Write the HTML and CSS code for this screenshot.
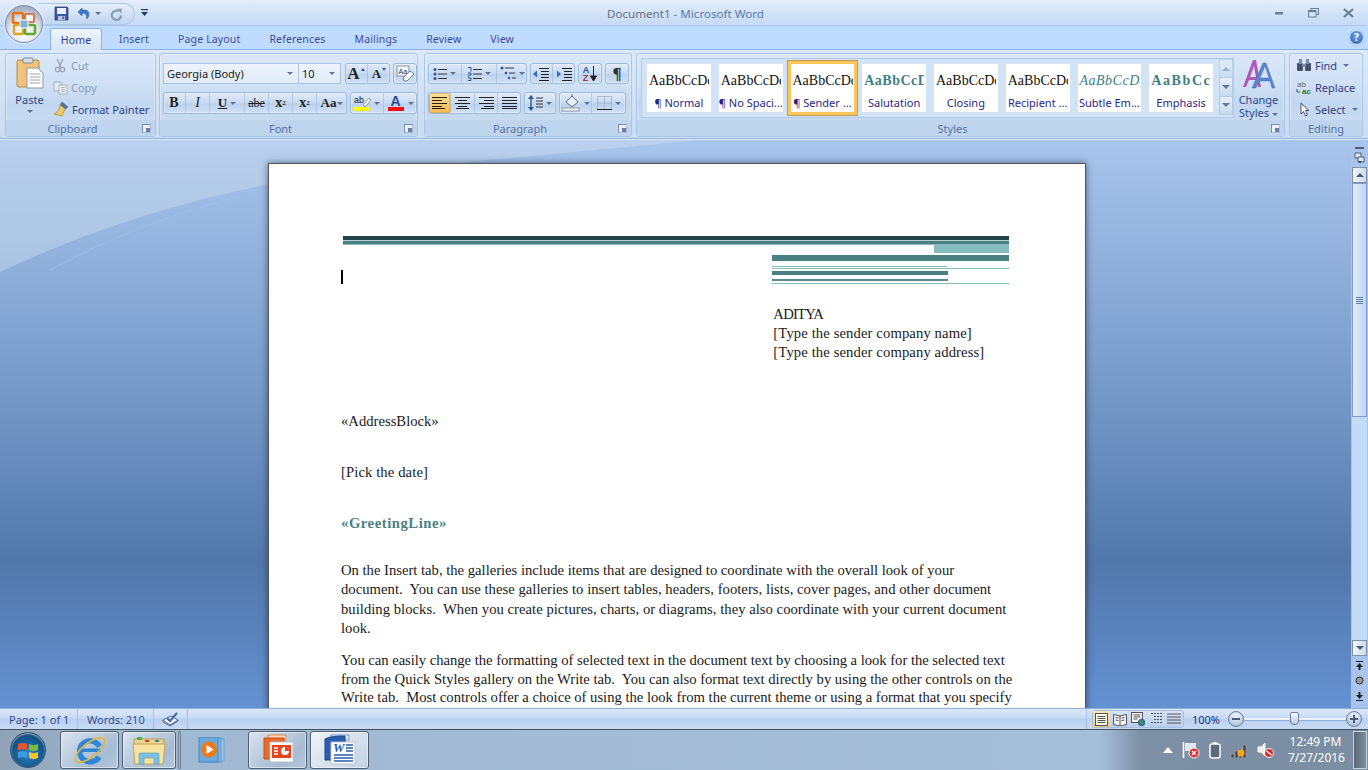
FILE: index.html
```html
<!DOCTYPE html>
<html>
<head>
    <title>Document1 - Microsoft Word</title>
    <link rel="stylesheet" href="styles.css">
</head>
<body>

<div class="office-button">
    <svg width="26" height="26" viewBox="0 0 26 26">
        <rect x="2" y="2" width="10" height="10" rx="1.5" fill="none" stroke="#e8741a" stroke-width="2.6"/>
        <rect x="14" y="3" width="9" height="8" rx="1" fill="#f4f4f4" stroke="#d9582a" stroke-width="1.6"/>
        <rect x="3" y="14" width="9" height="9" rx="1" fill="none" stroke="#e0a81f" stroke-width="2.4"/>
        <rect x="14" y="14" width="10" height="9" rx="1.5" fill="none" stroke="#5fa832" stroke-width="2.6"/>
        <rect x="9" y="9" width="8" height="8" fill="#7fb0de" stroke="#fff"/>
    </svg>
</div>

<header class="titlebar">
    <div class="qat">
        <svg width="15" height="15" viewBox="0 0 15 15"><path d="M1 1h12l1 1v12H1z" fill="#3a5aa6" stroke="#26386e" stroke-width=".7"/><rect x="3" y="2" width="9" height="6" fill="#e9eefa"/><rect x="4" y="10" width="7" height="4" fill="#b9c2d8"/><rect x="8.5" y="10.6" width="1.6" height="2.6" fill="#3a5aa6"/></svg>
        <svg class="undo" width="15" height="15" viewBox="0 0 15 15"><path d="M5 2 1 6l4 4V7.5c3-.6 5 .8 4.6 5.5 3.2-2.5 3.6-8-1-9L5 4z" fill="#3f78c8" stroke="#2a5596" stroke-width=".5"/></svg>
        <span class="arrow qat-arrow"></span>
        <svg class="redo" width="14" height="14" viewBox="0 0 14 14"><path d="M9.5 4.2A4.6 4.6 0 1 0 12 8.4" fill="none" stroke="#8a9db6" stroke-width="2.2"/><path d="M7.6 1.8h5v5z" fill="#8a9db6"/></svg>
    </div>
    <svg class="customize" width="7" height="8" viewBox="0 0 7 8"><rect y="0" width="7" height="1.2" fill="#1f3b66"/><path d="M0 3h7L3.5 7z" fill="#1f3b66"/></svg>
    <div class="doc-title"><span class="doc-name">Document1</span> - <span class="app-name">Microsoft Word</span></div>
    <div class="win-controls">
        <svg width="9" height="4" viewBox="0 0 9 4"><rect y="1" width="8" height="2.5" fill="#6a7f99"/></svg>
        <svg width="11" height="10" viewBox="0 0 11 10"><rect x="3" y=".5" width="7.5" height="6" fill="none" stroke="#6a7f99"/><rect x=".5" y="2.5" width="7.5" height="6.5" fill="#d6e4f6" stroke="#6a7f99"/><rect x=".5" y="2.5" width="7.5" height="1.6" fill="#6a7f99"/></svg>
        <svg width="11" height="10" viewBox="0 0 11 10"><path d="M1 1l9 8M10 1 1 9" stroke="#6a7f99" stroke-width="2.2"/></svg>
    </div>
</header>

<nav class="tabs">
    <div class="tab tab-active">Home</div>
    <div class="tab">Insert</div>
    <div class="tab">Page Layout</div>
    <div class="tab">References</div>
    <div class="tab">Mailings</div>
    <div class="tab">Review</div>
    <div class="tab">View</div>
    <div class="help">?</div>
</nav>

<section class="ribbon">
    <div class="group g-clipboard">
        <div class="group-body clip-body">
            <div class="paste">
                <svg width="28" height="32" viewBox="0 0 28 32"><rect x="1" y="3" width="22" height="27" rx="2" fill="#f0c27a" stroke="#b98a46"/><rect x="7" y="1" width="10" height="5" rx="1" fill="#d8dde6" stroke="#7d8796"/><path d="M11 11h11l5 5v15H11z" fill="#fff" stroke="#8b97aa"/><path d="M13.5 17h11M13.5 20h11M13.5 23h11M13.5 26h11" stroke="#9aa5b5"/></svg>
                <span class="paste-label">Paste</span>
                <span class="arrow"></span>
            </div>
            <div class="clip-list">
                <div class="small-btn disabled">
                    <svg width="15" height="15" viewBox="0 0 15 15"><path d="M4 1l4 8M10 1 6 9" stroke="#9aa5b2" stroke-width="1.4"/><circle cx="4.5" cy="11.5" r="2.2" fill="none" stroke="#9aa5b2" stroke-width="1.3"/><circle cx="9.5" cy="11.5" r="2.2" fill="none" stroke="#9aa5b2" stroke-width="1.3"/></svg>
                    Cut
                </div>
                <div class="small-btn disabled">
                    <svg width="15" height="15" viewBox="0 0 15 15"><path d="M1 2h7v9H1z" fill="#e4ebf4" stroke="#a5b0be"/><path d="M6 5h8v9H6z" fill="#eef2f8" stroke="#a5b0be"/><path d="M8 7.5h4M8 9.5h4M8 11.5h4" stroke="#a5b0be"/></svg>
                    Copy
                </div>
                <div class="small-btn">
                    <svg width="16" height="16" viewBox="0 0 16 16"><path d="M9 1l6 5-3 2-5-4z" fill="#5a6ea0" stroke="#3d4f7d" stroke-width=".5"/><path d="M7 4l5 4-3 7-8-2c3-1 5-4 6-9z" fill="#eccb6a" stroke="#a98a38" stroke-width=".7"/></svg>
                    Format Painter
                </div>
            </div>
        </div>
        <div class="group-label">Clipboard<span class="launcher"></span></div>
    </div>

    <div class="group g-font">
        <div class="group-body rows">
            <div class="row">
                <div class="combo w136">Georgia (Body)<span class="arrow"></span></div>
                <div class="combo w42 joined">10<span class="arrow"></span></div>
                <div class="btn-set set-top set-grow">
                    <div class="cell w23 grow-a">A<i class="up"></i></div>
                    <div class="cell w22 shrink-a">A<i class="down"></i></div>
                </div>
                <div class="btn-set set-top">
                    <div class="cell w24">
                        <svg width="20" height="17" viewBox="0 0 20 17"><rect x="2" y="1" width="12" height="10" fill="#f2f5fa" stroke="#8b97aa"/><text x="3.5" y="8.5" font-size="7" font-family="Liberation Sans" fill="#333">Aa</text><path d="M8 13l7-7 4 3-7 7H9z" fill="#fff" stroke="#6a7b94"/></svg>
                    </div>
                </div>
            </div>
            <div class="row">
                <div class="btn-set">
                    <div class="cell w23 fmt-b">B</div>
                    <div class="cell w24 fmt-i">I</div>
                    <div class="cell w35 fmt-u"><u>U</u><span class="arrow"></span></div>
                    <div class="cell w24 fmt-s">abe</div>
                    <div class="cell w24 fmt-sub">x<sub>2</sub></div>
                    <div class="cell w24 fmt-sub">x<sup>2</sup></div>
                    <div class="cell w30 fmt-aa">Aa<span class="arrow"></span></div>
                </div>
                <div class="btn-set">
                    <div class="cell w34 stack">
                        <svg width="18" height="18" viewBox="0 0 18 18"><text x="1" y="9" font-size="9" font-family="Liberation Sans" fill="#222">ab</text><path d="M10 11l6-7 2 2-6 7z" fill="#fff" stroke="#6a7b94" stroke-width=".8"/><rect x="1" y="13" width="15" height="4" fill="#ffff00"/></svg>
                        <span class="arrow"></span>
                    </div>
                    <div class="cell w33 stack">
                        <svg width="17" height="18" viewBox="0 0 17 18"><text x="2.5" y="11.5" font-size="14" font-weight="bold" font-family="Liberation Sans" fill="#2d4f8e">A</text><rect x="0" y="13" width="16" height="4" fill="#f01010"/></svg>
                        <span class="arrow"></span>
                    </div>
                </div>
            </div>
        </div>
        <div class="group-label">Font<span class="launcher"></span></div>
    </div>

    <div class="group g-para">
        <div class="group-body rows">
            <div class="row">
                <div class="btn-set set-top">
                    <div class="cell w34">
                        <svg width="14" height="14" viewBox="0 0 14 14"><g fill="#2f5597"><circle cx="2" cy="2.5" r="1.5"/><circle cx="2" cy="7" r="1.5"/><circle cx="2" cy="11.5" r="1.5"/></g><path d="M5 2.5h9M5 7h9M5 11.5h9" stroke="#333"/></svg>
                        <span class="arrow"></span>
                    </div>
                    <div class="cell w35">
                        <svg width="14" height="14" viewBox="0 0 14 14"><path d="M0 .5h3v4M0 6h3v2H0v3M0 11h3v2.500H0" fill="none" stroke="#2f5597"/><path d="M5 2.500h9M5 7h9M5 11.500h9" stroke="#333"/></svg>
                        <span class="arrow"></span>
                    </div>
                    <div class="cell w30">
                        <svg width="16" height="15" viewBox="0 0 16 15"><circle cx="2" cy="2" r="1.500" fill="#2f5597"/><circle cx="6" cy="7" r="1.300" fill="#2f5597"/><circle cx="9" cy="12" r="1.200" fill="#2f5597"/><path d="M5 2h9M9 7h6M12 12h4" stroke="#333"/></svg>
                        <span class="arrow"></span>
                    </div>
                </div>
                <div class="btn-set set-top">
                    <div class="cell w23">
                        <svg width="16" height="14" viewBox="0 0 16 14"><path d="M6 1.500h10M8 4.500h8M8 7.500h8M8 10.500h8M6 13.500h10" stroke="#222" stroke-width="1.200"/><path d="M0 7l4-3.500v7z" fill="#2f6fc0"/></svg>
                    </div>
                    <div class="cell w22">
                        <svg width="16" height="14" viewBox="0 0 16 14"><path d="M6 1.500h10M8 4.500h8M8 7.500h8M8 10.500h8M6 13.500h10" stroke="#222" stroke-width="1.200"/><path d="M5 7 1 3.500v7z" fill="#2f6fc0"/></svg>
                    </div>
                </div>
                <div class="btn-set set-top">
                    <div class="cell w24 sort">
                        <span class="sort-letters"><b class="az-a">A</b><b class="az-z">Z</b></span>
                        <svg width="7" height="16" viewBox="0 0 7 16"><path d="M3.500 0v13M0.500 10l3 5 3-5z" stroke="#222" fill="#222"/></svg>
                    </div>
                </div>
                <div class="btn-set set-top">
                    <div class="cell w24 pilcrow">¶</div>
                </div>
            </div>
            <div class="row">
                <div class="btn-set">
                    <div class="cell w23 active">
                        <svg width="15" height="12" viewBox="0 0 15 12"><path d="M0 .5h15M0 3.500h10M0 6.500h15M0 9.500h10M0 11.500h13" stroke="#222"/></svg>
                    </div>
                    <div class="cell w24">
                        <svg width="15" height="12" viewBox="0 0 15 12"><path d="M0 .5h15M3 3.500h9M0 6.500h15M3 9.500h9M1 11.500h13" stroke="#222"/></svg>
                    </div>
                    <div class="cell w23">
                        <svg width="15" height="12" viewBox="0 0 15 12"><path d="M0 .5h15M5 3.500h10M0 6.500h15M5 9.500h10M2 11.500h13" stroke="#222"/></svg>
                    </div>
                    <div class="cell w23">
                        <svg width="15" height="12" viewBox="0 0 15 12"><path d="M0 .5h15M0 3.500h15M0 6.500h15M0 9.500h15M0 11.500h15" stroke="#222"/></svg>
                    </div>
                </div>
                <div class="btn-set">
                    <div class="cell w32">
                        <svg width="15" height="16" viewBox="0 0 15 16"><path d="M3 2v12" stroke="#2f5597" stroke-width="1.400"/><path d="M3 0 0 4h6zM3 16 0 12h6z" fill="#2f5597"/><path d="M8 3h7M8 6h7M8 9h7M8 12h7" stroke="#333"/></svg>
                        <span class="arrow"></span>
                    </div>
                </div>
                <div class="btn-set">
                    <div class="cell w33">
                        <svg width="20" height="18" viewBox="0 0 20 18"><path d="M5 8l6-6 6 6-6 5z" fill="#e9eef6" stroke="#5a6a80"/><path d="M11 2V0" stroke="#5a6a80"/><rect x="1" y="14" width="17" height="3" fill="#f5f7fa" stroke="#8b97aa"/></svg>
                        <span class="arrow"></span>
                    </div>
                    <div class="cell w34">
                        <svg width="15" height="14" viewBox="0 0 15 14"><path d="M.5.500h14v13H.5zM7.500.500v13M.5 7h14" fill="none" stroke="#8a97a8" stroke-dasharray="1 1"/><path d="M0 13.500h15" stroke="#222"/></svg>
                        <span class="arrow"></span>
                    </div>
                </div>
            </div>
        </div>
        <div class="group-label">Paragraph<span class="launcher"></span></div>
    </div>

    <div class="group g-styles">
        <div class="group-body styles-body">
            <div class="gallery">
                <div class="style-cell"><div class="sample">AaBbCcDd</div><div class="style-name">¶ Normal</div></div>
                <div class="style-cell"><div class="sample">AaBbCcDd</div><div class="style-name">¶ No Spaci...</div></div>
                <div class="style-cell selected"><div class="sample">AaBbCcDd</div><div class="style-name">¶ Sender ...</div></div>
                <div class="style-cell"><div class="sample teal bold sal">AaBbCcDd</div><div class="style-name">Salutation</div></div>
                <div class="style-cell"><div class="sample">AaBbCcDd</div><div class="style-name">Closing</div></div>
                <div class="style-cell"><div class="sample">AaBbCcDd</div><div class="style-name">Recipient ...</div></div>
                <div class="style-cell"><div class="sample teal ital sub">AaBbCcDd</div><div class="style-name">Subtle Em...</div></div>
                <div class="style-cell"><div class="sample teal bold wide">AaBbCcDd</div><div class="style-name">Emphasis</div></div>
                <div class="gallery-scroll">
                    <div class="gs-btn gs-off"><i class="tri-up"></i></div>
                    <div class="gs-btn"><i class="tri-down"></i></div>
                    <div class="gs-btn gs-more"><i class="tri-down"></i></div>
                </div>
            </div>
            <div class="change-styles">
                <svg width="34" height="31" viewBox="0 0 34 31"><path d="M1 29 11 2h3l5 27h-3l-1-7H7l-3 7zM8 19h6l-2-11z" fill="#b05ab8"/><path d="M10 30 21 5h3l9 25h-3l-2-7H17l-3 7zM18 20h9l-4-12z" fill="#5b86cc" stroke="#3b66ac" stroke-width=".4"/></svg>
                <span class="cs-label">Change<br>Styles<span class="arrow"></span></span>
            </div>
        </div>
        <div class="group-label">Styles<span class="launcher"></span></div>
    </div>

    <div class="group g-editing">
        <div class="group-body edit-list">
            <div class="small-btn">
                <svg width="16" height="14" viewBox="0 0 16 14"><rect x="1" y="5" width="6" height="8" rx="1" fill="#44506a"/><rect x="9" y="5" width="6" height="8" rx="1" fill="#44506a"/><rect x="3" y="1" width="3" height="5" fill="#7b8dab"/><rect x="10" y="1" width="3" height="5" fill="#7b8dab"/><rect x="6" y="6" width="4" height="3" fill="#7b8dab"/></svg>
                Find<span class="arrow"></span>
            </div>
            <div class="small-btn">
                <svg width="16" height="15" viewBox="0 0 16 15"><text x="1" y="7" font-size="8" font-family="Liberation Sans" fill="#666">ab</text><text x="6" y="14" font-size="8" font-weight="bold" font-family="Liberation Sans" fill="#2f7a32">ac</text><path d="M1 9v3h3" fill="none" stroke="#2f5597"/></svg>
                Replace
            </div>
            <div class="small-btn">
                <svg width="16" height="15" viewBox="0 0 16 15"><path d="M5 1v11l2.500-2.500 2 4.500 2-1-2-4.500H13z" fill="#fff" stroke="#44506a"/></svg>
                Select<span class="arrow"></span>
            </div>
        </div>
        <div class="group-label lab-center">Editing</div>
    </div>
</section>

<main class="main">
    <div class="workspace">
        <svg class="swoosh" width="700" height="140" viewBox="0 0 700 140"><defs><linearGradient id="sw" x1="0" y1="0" x2="0" y2="1"><stop offset="0" stop-color="#b9d0ee"/><stop offset="1" stop-color="#a8c3e2"/></linearGradient></defs><path d="M0 132C90 90 180 60 300 38L700 0H0z" fill="url(#sw)"/><path d="M50 130C120 92 190 66 300 42" fill="none" stroke="#a9c5e6" stroke-opacity=".45"/></svg>
        <div class="page">
            <div class="rule-top"></div>
            <div class="letterhead">
                <div class="lh-left"><span class="caret"></span></div>
                <div class="lh-right">
                    <div class="lh-block"></div>
                    <div class="lh-bar"></div>
                    <div class="lh-thin short"></div>
                    <div class="lh-thin"></div>
                    <div class="lh-bar2"></div>
                    <div class="lh-gray"></div>
                    <div class="lh-thin"></div>
                    <div class="sender">
                        <div class="sender-name">ADITYA</div>
                        <div class="sender-line">[Type the sender company name]</div>
                        <div class="sender-line">[Type the sender company address]</div>
                    </div>
                </div>
            </div>
            <div class="address">«AddressBlock»</div>
            <div class="date">[Pick the date]</div>
            <div class="greeting">«GreetingLine»</div>
            <div class="para">
                <div class="jl sp-n">On the Insert tab, the galleries include items that are designed to coordinate with the overall look of your</div>
                <div class="jl sp-w">document.  You can use these galleries to insert tables, headers, footers, lists, cover pages, and other document</div>
                <div class="jl sp-w">building blocks.  When you create pictures, charts, or diagrams, they also coordinate with your current document</div>
                <div class="jl">look.</div>
            </div>
            <div class="para para2">
                <div class="jl sp-t">You can easily change the formatting of selected text in the document text by choosing a look for the selected text</div>
                <div class="jl sp-m">from the Quick Styles gallery on the Write tab.  You can also format text directly by using the other controls on the</div>
                <div class="jl sp-m">Write tab.  Most controls offer a choice of using the look from the current theme or using a format that you specify</div>
                <div class="jl">directly.</div>
            </div>
        </div>
    </div>
    <aside class="scrollbar">
        <div class="ruler-btn">
            <svg width="11" height="19" viewBox="0 0 11 19"><rect x="1" y="0" width="9" height="2" fill="#4c5c7a"/><path d="M1 6h6v5H1z" fill="#dfe8f4" stroke="#4c5c72"/><path d="M4 10h6v5H4z" fill="#dfe8f4" stroke="#4c5c72"/><path d="M4 14l2 2 2-2z" fill="#333"/></svg>
        </div>
        <div class="sb-btn sb-up"><i class="tri-up dark"></i></div>
        <div class="sb-thumb"><span class="grip"></span></div>
        <div class="sb-track"></div>
        <div class="sb-btn sb-down"><i class="tri-down dark"></i></div>
        <div class="browse">
            <svg width="9" height="9" viewBox="0 0 9 9"><path d="M1 0h7v1H1zM4.500 2 8 6H5.500v3h-2V6H1z" fill="#222"/></svg>
            <svg width="9" height="9" viewBox="0 0 9 9"><circle cx="4.500" cy="4.500" r="3.500" fill="#999" stroke="#333"/></svg>
            <svg width="9" height="9" viewBox="0 0 9 9"><path d="M1 8h7v1H1zM4.500 7 8 3H5.500V0h-2v3H1z" fill="#222"/></svg>
        </div>
    </aside>
</main>

<footer class="statusbar">
    <div class="st-sec st-page">Page: 1 of 1</div>
    <div class="st-sec st-words">Words: 210</div>
    <div class="st-sec st-proof">
        <svg width="17" height="16" viewBox="0 0 17 16"><path d="M1 9l8-4 7 4-8 5z" fill="#eef2f8" stroke="#5a6a88"/><path d="M1 9v2l7 4 8-5V9" fill="none" stroke="#5a6a88"/><path d="M5 7l3 3 7-8" fill="none" stroke="#3b64b4" stroke-width="2"/></svg>
    </div>
    <div class="st-fill"></div>
    <div class="st-right">
        <div class="views">
            <div class="view active">
                <svg width="13" height="13" viewBox="0 0 13 13"><rect x=".5" y=".5" width="12" height="12" fill="#fff" stroke="#555"/><path d="M2.500 3.500h8M2.500 5.500h8M2.500 7.500h8M2.500 9.500h8" stroke="#555"/></svg>
            </div>
            <div class="view">
                <svg width="14" height="13" viewBox="0 0 14 13"><path d="M.5 1.500 7 3l6.500-1.500v10L7 13 .5 11.500z" fill="#f4f6fa" stroke="#555"/><path d="M7 3v10M2.500 4.500l3 .5M2.500 7l3 .5M8.500 5l3-.5M8.500 7.500l3-.5" stroke="#555"/></svg>
            </div>
            <div class="view">
                <svg width="14" height="14" viewBox="0 0 14 14"><rect x=".5" y=".5" width="11" height="10" fill="#f4f6fa" stroke="#555"/><path d="M2.500 3h7M2.500 5h7M2.500 7h4" stroke="#555"/><circle cx="10.500" cy="10.500" r="3.200" fill="#3d8e6a" stroke="#2f5597"/></svg>
            </div>
            <div class="view">
                <svg width="13" height="12" viewBox="0 0 13 12"><path d="M2 .5h11M5 3.500h8M5 6.500h8M2 9.500h11" stroke="#555" stroke-dasharray="2 1"/></svg>
            </div>
            <div class="view">
                <svg width="14" height="12" viewBox="0 0 14 12"><path d="M0 1h14M0 4h14M0 7h14M0 10h14" stroke="#555" stroke-width="1.200"/></svg>
            </div>
        </div>
        <div class="zoom-pct">100%</div>
        <div class="zoom-btn"><i class="minus"></i></div>
        <div class="slider"><span class="thumb"></span></div>
        <div class="zoom-btn"><i class="minus"></i><i class="plus-v"></i></div>
    </div>
</footer>

<footer class="taskbar">
    <div class="start-orb">
        <svg width="22" height="20" viewBox="0 0 22 20"><path d="M1 4c3-1.500 6-1.500 9 0v6c-3-1-6-1-9 0z" fill="#e8562a"/><path d="M12 4c3 1.500 6 1.500 9 0v6c-3 1.500-6 1.500-9 0z" fill="#7fbb3c"/><path d="M1 12c3-1 6-1 9 0v6c-3-1-6-1-9 0z" fill="#3f9be0"/><path d="M12 12c3 1.500 6 1.500 9 0v6c-3 1.500-6 1.500-9 0z" fill="#f3c52c"/></svg>
    </div>
    <div class="task-btn tb-ie">
        <svg width="34" height="34" viewBox="0 0 34 34"><path d="M26.500 13.500A10.500 10.500 0 1 0 26 24" fill="none" stroke="#2f86d8" stroke-width="5.500"/><rect x="9" y="15.500" width="19" height="3.500" fill="#2f86d8"/><ellipse cx="17" cy="17" rx="18" ry="7" transform="rotate(-38 17 17)" fill="none" stroke="#e9b52c" stroke-width="1.600"/></svg>
    </div>
    <div class="task-btn tb-ex">
        <svg width="34" height="30" viewBox="0 0 34 30"><path d="M2 4h30v6H2z" fill="#e9d68c" stroke="#b89a48"/><rect x="5" y="2" width="5" height="3" fill="#4cb050"/><rect x="13" y="5" width="4" height="2" fill="#c83a3a"/><rect x="23" y="5" width="4" height="2" fill="#3a7ad0"/><path d="M1 9h32l-2 20H3z" fill="#f6e3a0" stroke="#c2a458"/><path d="M7 29v-9c0-2 1-2 2-2h16c1 0 2 0 2 2v9h-5v-6H12v6z" fill="#7fc0e0" stroke="#5a9cc0" stroke-width=".6"/></svg>
    </div>
    <div class="task-sep"></div>
    <div class="task-plain">
        <svg width="30" height="26" viewBox="0 0 30 26"><rect x="10" y="2" width="16" height="22" fill="#a4c8e8" stroke="#6a9cc8"/><rect x="6" y="1" width="17" height="24" fill="#84b8e2" stroke="#5a94c8"/><rect x="1" y="0" width="19" height="25" fill="#6ba9dc" stroke="#4a88c0"/><circle cx="11" cy="12.500" r="8" fill="#ef7a1a"/><path d="M8.500 8v9l7-4.500z" fill="#fff"/></svg>
    </div>
    <div class="task-btn tb-ppt">
        <svg width="33" height="32" viewBox="0 0 33 32"><path d="M7 1h18v5H7z" fill="#f7d9c2" stroke="#e08a50"/><path d="M3 4h20v21H3z" fill="#ea6a28" stroke="#c94f14"/><path d="M9 8h23v20H9z" fill="#fff" stroke="#b9c2cc"/><rect x="11" y="11" width="19" height="13" fill="#e2461a"/><path d="M13 14h4M13 17h4M13 20h4" stroke="#fff" stroke-width="1.500"/><circle cx="24" cy="17" r="4" fill="#fff"/><path d="M24 17v-4a4 4 0 0 1 4 4z" fill="#e2461a"/></svg>
    </div>
    <div class="task-btn tb-word">
        <svg width="34" height="32" viewBox="0 0 34 32"><path d="M8 1h18v5H8z" fill="#dfe8f6" stroke="#7d9bc8"/><path d="M2 5c6-3 14-3 20-3v24H2z" fill="#2a5cb0" stroke="#1f4488"/><path d="M8 8h24v22H8z" fill="#fff" stroke="#b9c2cc"/><text x="10" y="18" font-size="13" font-weight="bold" font-style="italic" font-family="Liberation Serif" fill="#2a5cb0">W</text><path d="M23 11h7M23 14h7M23 17h7M11 21h19M11 24h19M11 27h19" stroke="#2a5cb0" stroke-width="1.500"/></svg>
    </div>
    <div class="task-fill"></div>
    <div class="tray">
        <svg width="10" height="6" viewBox="0 0 10 6"><path d="M0 6l5-6 5 6z" fill="#fff"/></svg>
        <svg width="18" height="18" viewBox="0 0 18 18"><path d="M1.500 1v16" stroke="#fff" stroke-width="1.600"/><path d="M3 2h11v8H3z" fill="#dfe6ee"/><circle cx="12" cy="12" r="5" fill="#d92a2a" stroke="#fff"/><path d="M10 10l4 4m0-4-4 4" stroke="#fff" stroke-width="1.400"/></svg>
        <svg width="12" height="17" viewBox="0 0 12 17"><rect x="1" y="2" width="10" height="14" rx="2" fill="#5a6a7a" stroke="#fff" stroke-width="1.500"/><rect x="4" y="0" width="4" height="2" fill="#fff"/></svg>
        <svg width="18" height="15" viewBox="0 0 18 15"><path d="M1 11h3v4H1zM5 8h3v7H5zM9 6h3v9H9zM13 2h3v13h-3z" fill="#444" stroke="#aab" stroke-width=".6"/><circle cx="11" cy="10" r="3.500" fill="#f6a81c"/></svg>
        <svg width="17" height="16" viewBox="0 0 17 16"><path d="M1 5h3l4-4v13L4 10H1z" fill="#e8eef4" stroke="#fff"/><circle cx="12" cy="11" r="4.500" fill="#d92a2a" stroke="#fff"/><path d="M9.500 9l5 4" stroke="#fff" stroke-width="1.500"/></svg>
    </div>
    <div class="clock"><div>12:49 PM</div><div>7/27/2016</div></div>
    <div class="show-desktop"></div>
</footer>

</body>
</html>
```

FILE: styles.css
```css
* {
    box-sizing: border-box;
}

html, body {
    margin: 0;
    padding: 0;
}

body {
    width: 1368px;
    height: 770px;
    overflow: hidden;
    display: flex;
    flex-direction: column;
    position: relative;
    font-family: "Noto Sans", sans-serif;
    font-size: 11px;
    color: #2b4a8c;
    background: #bfdbff;
}

svg {
    display: block;
    flex: none;
}

/* little dropdown arrow used everywhere */
.arrow {
    display: inline-block;
    width: 0;
    height: 0;
    border-left: 3px solid transparent;
    border-right: 3px solid transparent;
    border-top: 3px solid #5f7293;
}

/* office orb sits over the title bar and tabs */
.office-button {
    position: absolute;
    left: 5px;
    top: 5px;
    width: 38px;
    height: 38px;
    border-radius: 50%;
    display: flex;
    align-items: center;
    justify-content: center;
    background: radial-gradient(circle at 50% 75%, #fff 0, #dfe5ee 45%, #aeb9c8 72%, #8e9aac 100%);
    border: 1px solid #7b8ba2;
    box-shadow: 0 0 3px #fff;
    z-index: 3;
}

.titlebar {
    height: 26px;
    flex: none;
    display: flex;
    align-items: center;
    background: linear-gradient(#e4eefb, #d0e1f6 60%, #c6daf3);
    border-bottom: 1px solid #a8c6ec;
    position: relative;
}

.qat {
    margin-left: 38px;
    width: 97px;
    height: 22px;
    margin-top: 2px;
    padding-left: 16px;
    display: flex;
    align-items: center;
    background: linear-gradient(#e5effb, #c0d5f0);
    border: 1px solid #b0c8e6;
    border-left: none;
    border-radius: 0 11px 11px 0;
}

.undo {
    margin-left: 8px;
}

.qat-arrow {
    margin-left: 3px;
}

.redo {
    margin-left: 8px;
}

.customize {
    margin-left: 6px;
}

.doc-title {
    position: absolute;
    left: 607px;
    top: 6px;
    font-size: 11.6px;
    line-height: 16px;
    color: #6a6f84;
    white-space: nowrap;
}

.app-name {
    color: #5b7ba5;
}

.win-controls {
    margin-left: auto;
    margin-right: 14px;
    display: flex;
    align-items: center;
    gap: 24px;
}

.tabs {
    height: 24px;
    flex: none;
    display: flex;
    padding-left: 50px;
    background: #bfdbff;
    border-bottom: 1px solid #8db2e3;
    color: #3d4c95;
}

.tab {
    padding: 0 14.5px;
    line-height: 26px;
    font-size: 10.5px;
    letter-spacing: .15px;
    white-space: nowrap;
}

.tab-active {
    width: 52px;
    padding: 0;
    text-align: center;
    margin-top: 2px;
    margin-bottom: -1px;
    margin-right: 2.5px;
    line-height: 23px;
    color: #2c3f8c;
    background: linear-gradient(#eef5fd, #d6e5f8);
    border: 1px solid #8db2e3;
    border-bottom: none;
    border-radius: 3px 3px 0 0;
}

.help {
    margin-left: auto;
    margin-right: 4px;
    margin-top: 4px;
    width: 15px;
    height: 15px;
    border-radius: 50%;
    background: radial-gradient(circle at 50% 35%, #6ea4e8, #2a5fb4);
    border: 1px solid #e8f0fa;
    box-shadow: 0 0 1px #2a5fb4;
    color: #fff;
    font-weight: bold;
    font-size: 10px;
    line-height: 13px;
    text-align: center;
}

.ribbon {
    height: 90px;
    flex: none;
    display: flex;
    padding: 3px 0 2px 5px;
    background: linear-gradient(#dbe9f9, #c9dcf3);
    border-bottom: 1px solid #d4e6f8;
    box-shadow: inset 0 -1px 0 #98b8de;
}

.group {
    display: flex;
    flex-direction: column;
    border: 1px solid #a9c5e6;
    border-radius: 3px;
    background: linear-gradient(#d9e7f8 0, #cfe0f5 40%, #c2d7f0 60%, #cbddf3 100%);
    box-shadow: inset 0 0 0 1px rgba(255, 255, 255, .35);
}

.g-clipboard { width: 151px; margin-right: 3px; }
.g-font { width: 259px; margin-right: 6px; }
.g-para { width: 208px; margin-right: 4px; }
.g-styles { width: 649px; margin-right: 4px; }
.g-editing { width: 74px; }

.group-body {
    flex: 1;
    min-height: 0;
}

.group-label {
    height: 16px;
    flex: none;
    position: relative;
    padding-right: 16px;
    text-align: center;
    line-height: 18px;
    font-size: 11px;
    color: #5472a6;
    background: #bfd5ee;
    border-radius: 0 0 3px 3px;
}

.lab-center {
    padding-right: 0;
}

.launcher {
    position: absolute;
    right: 4px;
    top: 4px;
    width: 9px;
    height: 9px;
    border: 1px solid #7a90b0;
    border-right-color: #a9bcd4;
    border-bottom-color: #a9bcd4;
    background: #e8f0f9;
}

.launcher::after {
    content: "";
    position: absolute;
    right: 0;
    bottom: 0;
    width: 4px;
    height: 4px;
    background: #6a7f9f;
}

.clip-body {
    display: flex;
}

.paste {
    width: 47px;
    padding-top: 3px;
    display: flex;
    flex-direction: column;
    align-items: center;
}

.paste-label {
    margin-top: 3px;
    line-height: 15px;
}

.paste .arrow {
    margin-top: 3px;
}

.clip-list {
    display: flex;
    flex-direction: column;
}

.small-btn {
    height: 22px;
    flex: none;
    display: flex;
    align-items: center;
    gap: 3px;
    white-space: nowrap;
    color: #33407f;
}

.small-btn .arrow {
    margin-left: 3px;
}

.disabled {
    color: #8c9bb0;
}

.rows {
    padding: 9px 0 0 3px;
    display: flex;
    flex-direction: column;
    gap: 7px;
}

.row {
    display: flex;
    gap: 3px;
    height: 22px;
    flex: none;
}

.combo {
    height: 21px;
    padding: 0 5px 0 3px;
    display: flex;
    align-items: center;
    justify-content: space-between;
    background: linear-gradient(#eef4fc, #e0ebf8);
    border: 1px solid #abc3e0;
    color: #222;
    font-size: 11px;
    white-space: nowrap;
}

.combo.joined {
    margin-left: -3px;
    border-left: none;
}

.w22 { width: 22px; }
.w23 { width: 23px; }
.w24 { width: 24px; }
.w30 { width: 30px; }
.w32 { width: 32px; }
.w33 { width: 33px; }
.w34 { width: 34px; }
.w35 { width: 35px; }
.w42 { width: 42px; }
.w136 { width: 136px; }

.btn-set {
    display: flex;
    height: 22px;
    border: 1px solid #9fbbdc;
    border-radius: 3px;
    background: linear-gradient(#dfeafa, #c8daf1 50%, #bcd2ee 55%, #cfe0f5);
    box-shadow: inset 0 0 0 1px rgba(255, 255, 255, .3);
}

.set-top {
    height: 21px;
}

.set-grow {
    margin-left: 1px;
}

.cell {
    display: flex;
    align-items: center;
    justify-content: center;
    gap: 3px;
    border-right: 1px solid rgba(150, 178, 212, .55);
    color: #222;
    position: relative;
}

/* the set border eats into the first and last cell */
.cell:first-child {
    margin-left: -1px;
}

.cell:last-child {
    margin-right: -1px;
    border-right: none;
}

.cell.active {
    margin-left: 0;
    width: 22px;
    background: linear-gradient(#fddf9e, #fbb94c);
    border-radius: 2px;
    box-shadow: inset 0 0 0 1px rgba(190, 150, 80, .5);
}

.grow-a, .shrink-a, .fmt-b, .fmt-i, .fmt-u, .fmt-s, .fmt-sub, .fmt-aa, .pilcrow {
    font-family: "Liberation Serif", serif;
}

.grow-a {
    font-size: 17px;
    font-weight: bold;
}

.shrink-a {
    font-size: 13px;
    font-weight: bold;
}

.up, .down {
    width: 0;
    height: 0;
    border-left: 2.5px solid transparent;
    border-right: 2.5px solid transparent;
    margin-left: -2px;
    margin-bottom: 8px;
}

.up { border-bottom: 3px solid #2f5597; }
.down { border-top: 3px solid #2f5597; }

.fmt-b { font-weight: bold; font-size: 14px; }
.fmt-i { font-style: italic; font-size: 14px; }
.fmt-u { font-size: 13px; font-weight: bold; }
.fmt-s { font-size: 12px; text-decoration: line-through; }
.fmt-sub { font-size: 14px; font-weight: bold; gap: 0; }
.fmt-sub sub, .fmt-sub sup { font-size: 7px; }
.fmt-aa { font-size: 13px; font-weight: bold; gap: 1px; }

.sort { gap: 1px; }

.sort-letters {
    display: flex;
    flex-direction: column;
    font-family: "Liberation Sans", sans-serif;
    font-size: 9px;
    line-height: 8px;
}

.az-a { color: #2f5597; }
.az-z { color: #a33a3a; }

.pilcrow {
    font-size: 17px;
    font-weight: bold;
    color: #333;
}

.styles-body {
    display: flex;
    padding: 4px 0 0 4px;
}

.gallery {
    width: 593px;
    height: 60px;
    padding: 5px 0 0 5px;
    display: flex;
    gap: 8px;
    border: 1px solid #b4cbe6;
    background: #d3e3f6;
    position: relative;
}

.style-cell {
    width: 64px;
    height: 48px;
    background: #fff;
    overflow: hidden;
    text-align: center;
    color: #2b1f86;
}

.style-cell.selected {
    outline: 3px solid #fcc65a;
    box-shadow: 0 0 0 4px #c49a55;
    position: relative;
    z-index: 1;
}

.sample {
    height: 28px;
    line-height: 34px;
    padding-left: 2px;
    width: 62px;
    overflow: hidden;
    white-space: nowrap;
    text-align: left;
    font-family: "Liberation Serif", serif;
    font-size: 14px;
    color: #111;
}

.teal { color: #3f7f86; }
.bold { font-weight: bold; }
.ital { font-style: italic; }
.sal { letter-spacing: .5px; }
.sub { letter-spacing: .5px; }
.wide { letter-spacing: 1.6px; }

.style-name {
    line-height: 22px;
    white-space: nowrap;
    font-size: 11px;
}

.gallery-scroll {
    margin-left: -2px;
    margin-top: -5px;
    width: 14px;
    display: flex;
    flex-direction: column;
}

.gs-btn {
    height: 19.3px;
    display: flex;
    align-items: center;
    justify-content: center;
    background: linear-gradient(#e6eff9, #c8daf0);
    border: 1px solid #b4cbe6;
    margin-bottom: -1px;
}

.gs-off {
    opacity: .75;
}

.tri-up, .tri-down {
    width: 0;
    height: 0;
    border-left: 4px solid transparent;
    border-right: 4px solid transparent;
}

.tri-up { border-bottom: 4px solid #8a9db6; }
.tri-down { border-top: 4px solid #60789a; }
.tri-up.dark { border-bottom-color: #4c5c72; }
.tri-down.dark { border-top-color: #4c5c72; }

.change-styles {
    width: 49px;
    display: flex;
    flex-direction: column;
    align-items: center;
}

.cs-label {
    margin-top: 4px;
    text-align: center;
    line-height: 13px;
}

.cs-label .arrow {
    margin-left: 3px;
    vertical-align: middle;
}

.edit-list {
    padding: 0 0 0 6px;
    display: flex;
    flex-direction: column;
}

.main {
    flex: 1;
    min-height: 0;
    display: flex;
}

.workspace {
    flex: 1;
    overflow: hidden;
    position: relative;
    padding: 23px 0 0 268px;
    background: linear-gradient(#a8c5ec 0, #8fafdb 128px, #6f94c4 280px, #5278ab 422px, #5a83bc 490px, #6492d2 568px);
}

.swoosh {
    position: absolute;
    left: 0;
    top: 0;
}

.page {
    position: relative;
    width: 818px;
    height: 600px;
    padding: 72px 76px 0 72px;
    background: #fff;
    border: 1px solid #555;
    border-bottom: none;
    box-shadow: 0 0 7px rgba(20, 30, 55, .6);
    font-family: "Liberation Serif", serif;
    font-size: 14.67px;
    line-height: 19px;
    color: #1a1a1a;
}

.rule-top {
    margin-left: 2px;
    height: 9px;
    background: linear-gradient(#24454a 0, #24454a 4px, #b6d2d3 4px, #b6d2d3 5px, #4a8083 5px, #4a8083 8px, #87bcbf 8px);
}

.letterhead {
    display: flex;
}

.lh-left {
    width: 432px;
    padding-top: 25px;
}

.caret {
    display: block;
    width: 2px;
    height: 14px;
    background: #000;
}

.lh-right {
    width: 237px;
}

.lh-block {
    width: 75px;
    height: 8px;
    margin-left: auto;
    background: #87bcbf;
}

.lh-bar {
    height: 6px;
    margin-top: 2px;
    background: #4a8083;
}

.lh-thin {
    height: 1px;
    margin-top: 1px;
    background: #87bcbf;
}

.lh-thin.short {
    margin-top: 5px;
    width: 175px;
}

.lh-bar2 {
    width: 176px;
    height: 4px;
    margin-top: 2px;
    background: #4a8083;
}

.lh-gray {
    width: 176px;
    height: 2px;
    margin-top: 4px;
    background: #5f8a8c;
}

.lh-gray + .lh-thin {
    margin-top: 2px;
}

.sender {
    margin-top: 21px;
    padding-left: 1px;
    white-space: nowrap;
}

.sender-name {
    letter-spacing: -.8px;
}

.sender-line {
    letter-spacing: .11px;
}

.address {
    margin-top: 50px;
}

.date {
    margin-top: 32px;
    letter-spacing: .1px;
}

.greeting {
    margin-top: 32px;
    font-weight: bold;
    letter-spacing: .55px;
    color: #4a8083;
}

.para {
    margin-top: 28px;
    line-height: 19.3px;
}

.para2 {
    margin-top: 12.8px;
    line-height: 18.7px;
}

.jl {
    white-space: pre;
}

/* nudges so the long lines end where the hinted original does */
.sp-n { letter-spacing: -.01px; }
.sp-w { letter-spacing: .027px; }
.sp-t { letter-spacing: -.034px; }
.sp-m { letter-spacing: -.017px; }

.scrollbar {
    width: 17px;
    flex: none;
    display: flex;
    flex-direction: column;
    align-items: center;
    background: #a8c4ec;
}

.ruler-btn {
    height: 27px;
    padding-top: 7px;
}

.sb-btn {
    width: 15px;
    height: 16px;
    flex: none;
    display: flex;
    align-items: center;
    justify-content: center;
    background: linear-gradient(90deg, #f4f7fb, #cfd9e8);
    border: 1px solid #7e90a8;
}

.sb-thumb {
    width: 15px;
    height: 234px;
    flex: none;
    display: flex;
    align-items: center;
    justify-content: center;
    background: linear-gradient(90deg, #e4eefb, #bcd4f4);
    border: 1px solid #7e9cc6;
}

.grip {
    width: 7px;
    height: 7px;
    background: repeating-linear-gradient(#5f7ca8 0, #5f7ca8 1px, transparent 1px, transparent 2px);
}

.sb-track {
    flex: 1;
    width: 15px;
    background: #c4dbf7;
}

.browse {
    height: 52px;
    flex: none;
    display: flex;
    flex-direction: column;
    align-items: center;
    justify-content: space-around;
    padding: 2px 0 4px;
}

.statusbar {
    height: 21px;
    flex: none;
    display: flex;
    align-items: center;
    background: linear-gradient(#dbe8f9, #c6daf4 45%, #b8d0ef 50%, #c7dbf5);
    border-top: 1px solid #90aed6;
    color: #37478e;
}

.st-sec {
    height: 100%;
    display: flex;
    align-items: center;
    border-right: 1px solid #a5bfdf;
    white-space: nowrap;
}

.st-page {
    width: 78px;
    padding-left: 9px;
}

.st-words {
    width: 76px;
    padding-left: 9px;
}

.st-proof {
    width: 34px;
    padding-left: 8px;
}

.st-fill {
    flex: 1;
}

.st-right {
    width: 282px;
    height: 100%;
    display: flex;
    align-items: center;
    padding-left: 5px;
    border-left: 1px solid #a5bfdf;
}

.views {
    width: 92px;
    height: 18px;
    display: flex;
    border: 1px solid #a5bfdf;
    border-radius: 3px;
    background: linear-gradient(#d6e4f7, #b5cdec);
}

.view {
    flex: 1;
    display: flex;
    align-items: center;
    justify-content: center;
    border-right: 1px solid #c7d9ef;
}

.view.active {
    background: linear-gradient(#fde6ae, #fbc566);
}

.zoom-pct {
    width: 44px;
    text-align: center;
    color: #22307e;
}

.zoom-btn {
    width: 16px;
    height: 16px;
    flex: none;
    position: relative;
    border-radius: 50%;
    background: radial-gradient(circle at 50% 30%, #f0f5fc, #9db6d8);
    border: 1px solid #6c7f9c;
}

.minus, .plus-v {
    position: absolute;
    background: #4a5a74;
}

.minus {
    left: 3px;
    top: 6px;
    width: 8px;
    height: 2px;
}

.plus-v {
    left: 6px;
    top: 3px;
    width: 2px;
    height: 8px;
}

.slider {
    width: 102px;
    height: 2px;
    flex: none;
    position: relative;
    background: #e9f1fb;
    box-shadow: 0 1px 0 #90aed6;
}

.thumb {
    position: absolute;
    left: 46px;
    top: -6px;
    width: 9px;
    height: 13px;
    border: 1px solid #6c7f9c;
    border-radius: 2px 2px 4px 4px;
    background: linear-gradient(#f5f8fc, #b9cbe4);
}

.taskbar {
    height: 41px;
    flex: none;
    display: flex;
    align-items: center;
    position: relative;
    background: linear-gradient(90deg, #8fa3b7 0, #a0b8d0 130px, #a6bfd9 1100px, #7d90a5 1140px, #7b8da2 100%);
    border-top: 1px solid #40505f;
}

.start-orb {
    width: 36px;
    height: 36px;
    margin-left: 10px;
    margin-right: 14px;
    border-radius: 50%;
    display: flex;
    align-items: center;
    justify-content: center;
    background: radial-gradient(circle at 50% 60%, #2f87c8, #0e4f82 65%, #0a3152);
    border: 1px solid #35536f;
    box-shadow: inset 0 1px 2px rgba(255, 255, 255, .7);
}

.task-btn {
    height: 38px;
    display: flex;
    align-items: center;
    justify-content: center;
    border: 1px solid #4d5f72;
    border-radius: 3px;
    background: linear-gradient(140deg, #d9e4ef, #a6bcd2 70%, #b5c8db);
    box-shadow: inset 0 0 0 1px rgba(255, 255, 255, .5);
}

.tb-ie { width: 59px; margin-right: 3px; }
.tb-ex { width: 54px; }
.tb-ppt { width: 59px; margin-right: 3px; }
.tb-word { width: 59px; background: linear-gradient(140deg, #eef3f8, #c2d2e2); }

.task-sep {
    width: 3px;
    height: 38px;
    margin: 0 2px;
    border: 1px solid #6d7f92;
    border-radius: 1px;
}

.task-plain {
    width: 59px;
    margin-right: 6px;
    display: flex;
    justify-content: center;
}

.task-fill {
    flex: 1;
}

.tray {
    display: flex;
    align-items: center;
    gap: 9px;
    margin-right: 14px;
}

.clock {
    width: 55px;
    text-align: center;
    color: #fff;
    font-size: 12px;
    line-height: 16px;
    white-space: nowrap;
    margin-right: 10px;
}

.show-desktop {
    width: 14px;
    height: 38px;
    margin-right: 1px;
    border: 1px solid #c9d3dd;
    background: linear-gradient(90deg, #5b6977, #808f9f);
}
```
